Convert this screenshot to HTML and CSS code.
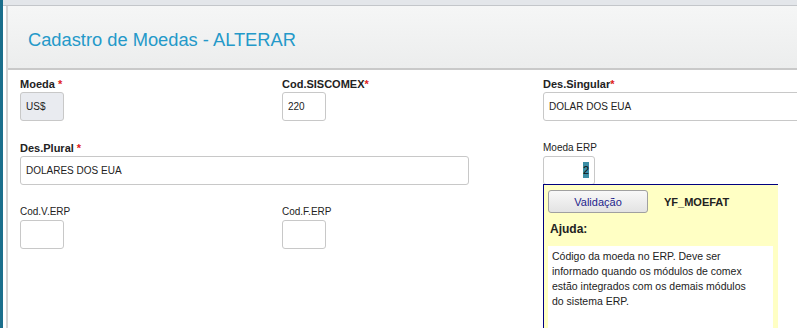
FILE: index.html
```html
<!DOCTYPE html>
<html lang="pt-BR">
<head>
    <meta charset="UTF-8">
    <meta name="viewport" content="width=device-width, initial-scale=1.0">
    <title>Cadastro de Moedas</title>
    <link rel="stylesheet" href="styles.css">
</head>
<body>
    <div class="app">
        <div class="topbar"></div>

        <div class="panel">
            <div class="head">
                <h1>Cadastro de Moedas - ALTERAR</h1>
            </div>

            <form class="form">
                <div class="field">
                    <label class="bold">Moeda <span class="req">*</span></label>
                    <input class="inp small" type="text" value="US$" disabled>
                </div>
                <div class="field">
                    <label class="bold">Cod.SISCOMEX<span class="req">*</span></label>
                    <input class="inp small" type="text" value="220">
                </div>
                <div class="field">
                    <label class="bold">Des.Singular<span class="req">*</span></label>
                    <input class="inp wide" type="text" value="DOLAR DOS EUA">
                </div>

                <div class="field span2">
                    <label class="bold">Des.Plural <span class="req">*</span></label>
                    <input class="inp plural" type="text" value="DOLARES DOS EUA">
                </div>
                <div class="field erp">
                    <label>Moeda ERP</label>
                    <div class="inp erp-box"><span class="sel">2</span></div>

                    <!-- help popup -->
                    <div class="tip">
                        <div class="tip-top">
                            <button type="button" class="btn">Validação</button>
                            <b>YF_MOEFAT</b>
                        </div>
                        <p class="tip-title">Ajuda:</p>
                        <div class="tip-text">
                            Código da moeda no ERP. Deve ser informado quando os módulos de comex estão integrados com os demais módulos do sistema ERP.
                        </div>
                    </div>
                </div>

                <div class="field">
                    <label>Cod.V.ERP</label>
                    <input class="inp small" type="text" value="">
                </div>
                <div class="field">
                    <label>Cod.F.ERP</label>
                    <input class="inp small" type="text" value="">
                </div>
            </form>
        </div>
    </div>
</body>
</html>
```

FILE: styles.css
```css
*{
    margin: 0;
    padding: 0;
    box-sizing: border-box;
}
body{
    background: #fff;
    font-family: "Liberation Sans", Arial, sans-serif;
    color: #222;
    height: 328px;
    overflow: hidden;
}
.app{
    border-left: 3px solid #1b6f8c;
    height: 328px;
}
/* top strip */
.topbar{
    height: 6px;
    background: #e3e6ea;
    border-bottom: 1px solid #c3c6ca;
}
.panel{
    margin-left: 3px;
    border-left: 2px solid #d4d4d4;
    height: 322px;
}
/* header */
.head{
    height: 64px;
    padding: 23px 0 0 20px;
    background: linear-gradient(#f5f6f6, #eceded);
    border-bottom: 2px solid #c9c9c9;
}
.head h1{
    font-size: 18.3px;
    font-weight: normal;
    line-height: 21px;
    color: #2499c9;
}
/* form */
.form{
    display: grid;
    grid-template-columns: 262px 261px 1fr;
    row-gap: 20px;
    padding: 7px 0 0 12px;
}
.field{
    position: relative;
}
.span2{
    grid-column: span 2;
}
.field label{
    display: block;
    font-size: 10px;
    line-height: 14px;
    margin-bottom: 1px;
    color: #222;
    white-space: nowrap;
}
.field label.bold{
    font-size: 11px;
    font-weight: bold;
}
.req{
    color: #e02020;
}
.inp{
    display: block;
    height: 29px;
    padding: 0 5px;
    border: 1px solid #c8c8c8;
    border-radius: 3px;
    background: #fff;
    font-family: "Liberation Sans", Arial, sans-serif;
    font-size: 10px;
    color: #222;
    outline: none;
}
.inp:disabled{
    background: #e9ebf0;
    color: #222;
}
.small{
    width: 44px;
}
.wide{
    width: 280px;
}
.plural{
    width: 449px;
}
.erp-box{
    width: 52px;
    text-align: right;
    line-height: 27px;
    font-size: 11px;
}
.sel{
    background: #3b8ea5;
    color: #111;
    padding: 2px 0;
}
/* help popup */
.tip{
    position: absolute;
    top: 43px;
    left: 0;
    width: 235px;
    height: 144px;
    padding: 5px 0 0 4px;
    background: #ffffc4;
    border-top: 1px solid #00007f;
    border-left: 1px solid #00007f;
    z-index: 2;
}
.tip-top{
    display: flex;
    align-items: center;
    gap: 16px;
    font-size: 11px;
}
.btn{
    width: 100px;
    height: 23px;
    border: 1px solid #a0a0a0;
    border-radius: 3px;
    background: linear-gradient(#f8f8f8, #e3e3e3);
    font-family: "Liberation Sans", Arial, sans-serif;
    font-size: 11px;
    color: #1e1e8c;
}
.tip-title{
    margin: 9px 0 10px 2px;
    font-size: 12px;
    font-weight: bold;
    line-height: 14px;
}
.tip-text{
    width: 225px;
    height: 82px;
    padding: 3px 26px 0 4px;
    background: #fff;
    font-size: 10.5px;
    line-height: 15px;
    color: #222;
}
```
